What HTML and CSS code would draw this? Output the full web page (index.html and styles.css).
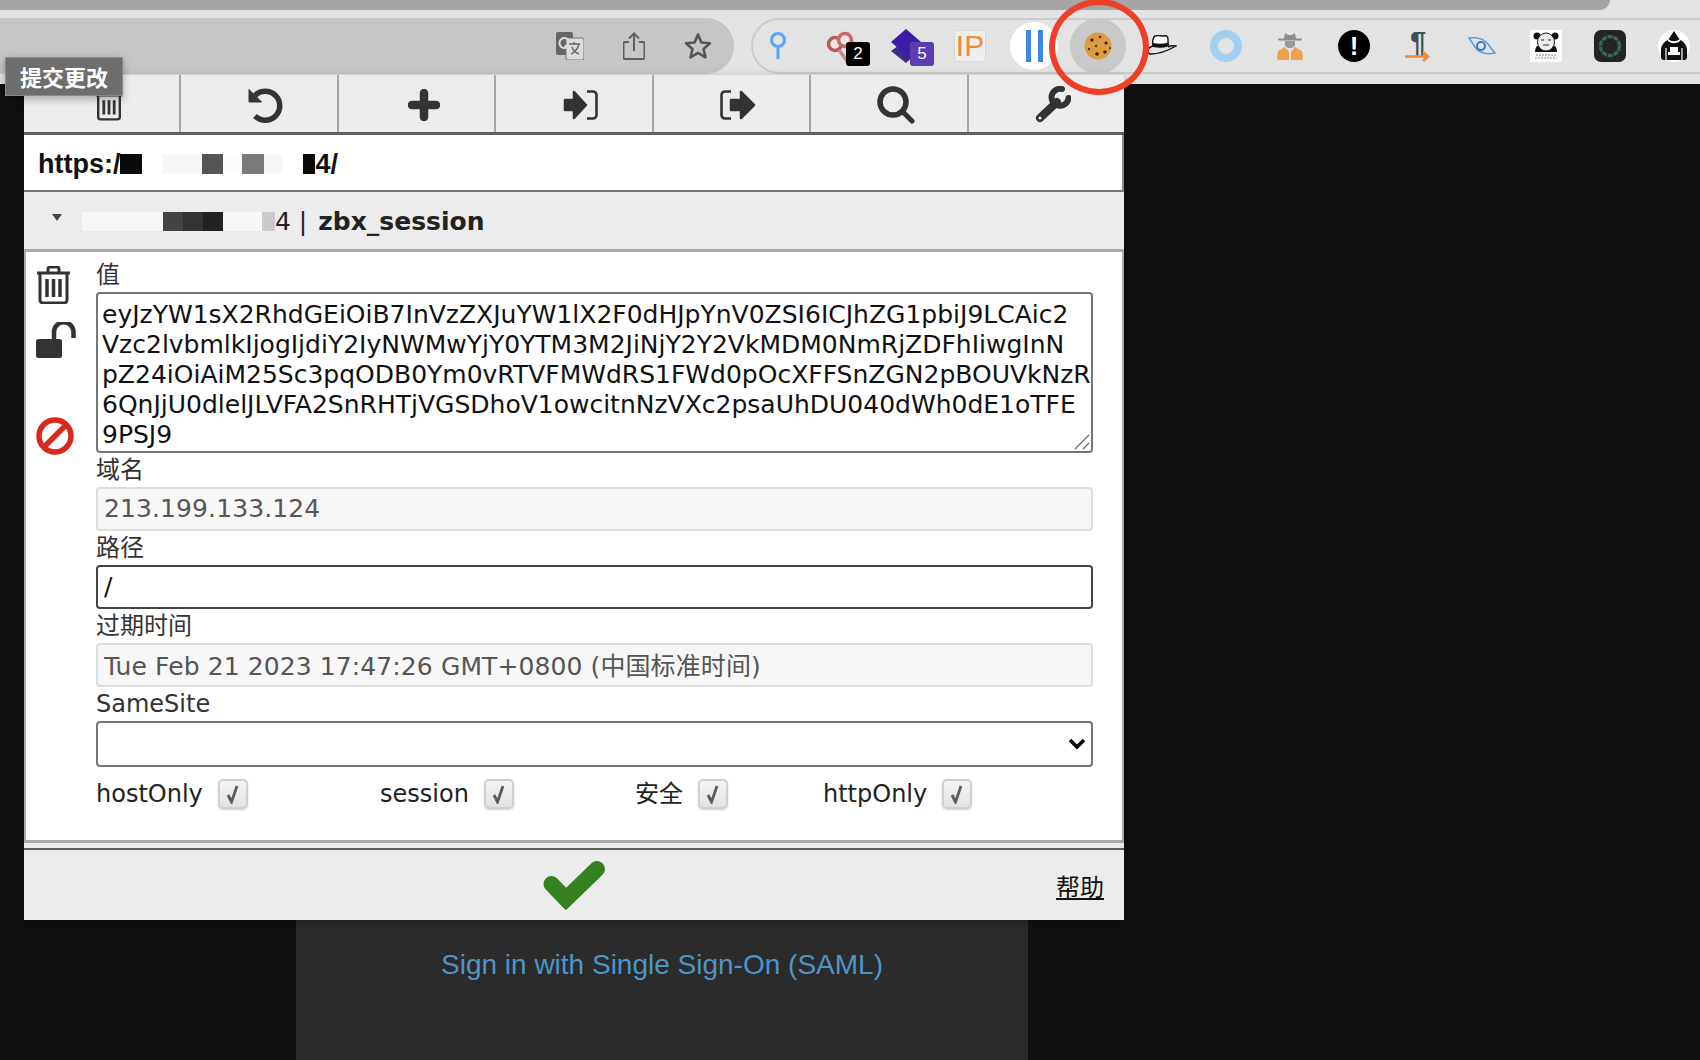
FILE: index.html

```html
<!DOCTYPE html>
<html lang="zh">
<head>
<meta charset="UTF-8" />
<title>zbx_session</title>
<link rel="stylesheet" href="styles.css">
</head>
<body>
  <header class="chrome">
    <div class="tabstrip"></div>
    <div class="toolbar">
      <div class="addr">
        <svg class="addr-icon" width="28" height="28" viewBox="0 0 28 28"><rect x="0" y="0" width="17" height="23" rx="2" fill="#666"/><rect x="10" y="6" width="18" height="22" rx="2" fill="#ddd" stroke="#777"/><path d="M13 12h11M18 10v2M15 22c4-2 7-6 8-10M16 15c1 3 4 6 7 7" stroke="#666" fill="none" stroke-width="1.4"/><path d="M12 7.500A5 5 0 1 0 12.500 14H8.500" stroke="#ddd" stroke-width="2" fill="none"/></svg>
        <svg class="addr-icon" width="22" height="28" viewBox="0 0 22 28"><path d="M6 10H2a1.500 1.500 0 0 0-1.500 1.500v14A1.500 1.500 0 0 0 2 27h18a1.500 1.500 0 0 0 1.500-1.500v-14A1.500 1.500 0 0 0 20 10h-4M11 19V1.500M6 6.500l5-5 5 5" fill="none" stroke="#5e5e5e" stroke-width="2"/></svg>
        <svg class="addr-icon" width="28" height="28" viewBox="0 0 28 28"><path d="M14 2.500l3.400 8 8.600.7-6.500 5.700 2 8.400L14 20.800l-7.500 4.500 2-8.400L2 11.200l8.600-.7z" fill="none" stroke="#555" stroke-width="2.600" stroke-linejoin="round"/></svg>
      </div>
      <div class="exts">
        <div class="ext first">
          <svg width="16" height="28" viewBox="0 0 16 28"><circle cx="8" cy="8" r="6.500" fill="none" stroke="#5aa5f5" stroke-width="3"/><path d="M8 14v13" stroke="#5aa5f5" stroke-width="3"/></svg>
        </div>
        <div class="ext">
          <svg width="34" height="34" viewBox="0 0 34 34"><circle cx="10" cy="15" r="6.500" fill="#f3e4e4" stroke="#b35c5c" stroke-width="3.500"/><circle cx="20" cy="11" r="6.500" fill="#f3e4e4" stroke="#c46a6a" stroke-width="3.500"/><path d="M14 21l8 11M24 16l7 8" stroke="#c98a8a" stroke-width="3.500"/></svg>
          <span class="badge badge-black">2</span>
        </div>
        <div class="ext">
          <svg width="32" height="34" viewBox="0 0 32 34"><path d="M1 22l8-6 20 6-13 12z" fill="#3a2a8c"/><path d="M16 0l15 13-15 13L1 13z" fill="#3b1ca6"/></svg>
          <span class="badge badge-purple">5</span>
        </div>
        <div class="ext"><span class="ip">IP</span></div>
        <div class="ext">
          <div class="pause"><i></i><i></i></div>
        </div>
        <div class="ext">
          <div class="cookie-hover">
            <svg width="30" height="28" viewBox="0 0 30 28"><circle cx="15" cy="14" r="13.500" fill="#dc9c3f"/><circle cx="9" cy="8" r="1.700" fill="#4a2a14"/><circle cx="17" cy="5" r="1.300" fill="#5a3318"/><circle cx="23" cy="11" r="1.600" fill="#3a2010"/><circle cx="13" cy="14" r="1.200" fill="#5a3318"/><circle cx="6" cy="17" r="1.200" fill="#5a3318"/><circle cx="14" cy="22" r="1.800" fill="#3a2010"/><circle cx="22" cy="20" r="1.700" fill="#3a2010"/><circle cx="27" cy="16" r="1" fill="#3a2010"/></svg>
          </div>
        </div>
        <div class="ext">
          <svg width="30" height="24" viewBox="0 0 30 24"><path d="M6 12c-1-4 0-9 2-10 3-1 6 0 9 0 3-1 4 1 4 4 0 2 0 4 .500 6" fill="#fff" stroke="#111" stroke-width="1.400"/><path d="M6 9c5 1 10 1 15-.500v4c-5 1.500-10 1.500-15 .500z" fill="#111"/><path d="M6 12c-3 1-5 3-5 5 0 2 1 3 3 3 8 0 18-4 25-8-3-.500-6 0-8 1" fill="none" stroke="#111" stroke-width="1.400"/></svg>
        </div>
        <div class="ext"><div class="ring"></div></div>
        <div class="ext">
          <svg width="26" height="28" viewBox="0 0 26 28"><path d="M7 7l1-6 3 2h4l3-2 1 6z" fill="#8c8c8c"/><rect x="1" y="6.500" width="24" height="2" rx="1" fill="#8c8c8c"/><path d="M8 9h10v3c0 3-2 4-5 4s-5-1-5-4z" fill="#9a9a9a"/><path d="M8 15l4 5v8H2c-1 0-2-1-2-2l1-7zM18 15l-4 5v8h10c1 0 2-1 2-2l-1-7z" fill="#eca24f"/></svg>
        </div>
        <div class="ext"><div class="alert">!</div></div>
        <div class="ext"><div class="pilcrow"><span>¶</span><svg width="26" height="11" viewBox="0 0 26 11"><path d="M0 5.500h23M18 1l5 4.500-5 4.500" fill="none" stroke="#ef8a33" stroke-width="2.600"/></svg></div></div>
        <div class="ext">
          <svg width="28" height="18" viewBox="0 0 28 18"><path d="M1 1c8-1 15 1 19 6 2 3 4 6 7 9-8 2-16 0-20-6C5 7 3 4 1 1z" fill="none" stroke="#5ba2dc" stroke-width="1.600"/><circle cx="13" cy="9" r="4" fill="none" stroke="#3f78c4" stroke-width="2"/></svg>
        </div>
        <div class="ext">
          <svg width="32" height="32" viewBox="0 0 32 32"><rect width="32" height="32" fill="#fff"/><circle cx="7" cy="6" r="3.500" fill="#111"/><circle cx="25" cy="6" r="3.500" fill="#111"/><path d="M5 22c0-3 1-5 2-6l18 0c1 1 2 3 2 6z" fill="#111"/><ellipse cx="16" cy="12" rx="8.500" ry="9" fill="#eee" stroke="#222"/><path d="M11 10h3M18 10h3M13 15h6" stroke="#222" stroke-width="1.200"/><path d="M6 25h20M5 28h22" stroke="#888" stroke-width="1.200" stroke-dasharray="2 1"/></svg>
        </div>
        <div class="ext">
          <svg width="32" height="32" viewBox="0 0 32 32"><rect width="32" height="32" rx="7" fill="#232323"/><circle cx="16" cy="16" r="9.500" fill="none" stroke="#34665a" stroke-width="3.500" stroke-dasharray="5 1"/></svg>
        </div>
        <div class="ext">
          <svg width="32" height="32" viewBox="0 0 32 32"><circle cx="16" cy="16" r="16" fill="#fff"/><path d="M16 1l6 9c3 1 7 5 7 10v7c0 2-1 3-3 3H6c-2 0-3-1-3-3v-7c0-5 4-9 7-10z" fill="#111"/><path d="M10 9c4 3 8 3 12 0v2c-4 3-8 3-12 0zM10 22h12v3H10zM12 17h8v5h-8z" fill="#fff"/><path d="M8 18v12M24 18v12" stroke="#fff" stroke-width="1.200"/></svg>
        </div>
      </div>
    </div>
  </header>

  <main class="page">
    <div class="login-card">
      <a class="saml-link">Sign in with Single Sign-On (SAML)</a>
    </div>
  </main>

  <section class="popup">
    <nav class="tools">
      <div class="tool">
        <svg width="28" height="38" viewBox="0 0 35 38"><path d="M12 6V3a2 2 0 0 1 2-2h7a2 2 0 0 1 2 2v3M1 7h33M4 7v27a3 3 0 0 0 3 3h21a3 3 0 0 0 3-3V7" fill="none" stroke="#333" stroke-width="3"/><path d="M11 13v18M17.500 13v18M24 13v18" stroke="#333" stroke-width="3.500"/></svg>
      </div>
      <div class="tool">
        <svg width="36" height="36" viewBox="0 0 36 36"><path d="M7 8.500A14.500 14.500 0 1 1 7 29" fill="none" stroke="#333" stroke-width="5.500"/><path d="M1 2.500v12.500h12.500z" fill="#333" stroke="#333" stroke-linejoin="round"/></svg>
      </div>
      <div class="tool">
        <svg width="32" height="32" viewBox="0 0 32 32"><path d="M16 4v24M4 16h24" stroke="#333" stroke-width="8.500" stroke-linecap="round"/></svg>
      </div>
      <div class="tool">
        <svg width="35" height="30" viewBox="0 0 35 30"><path d="M2 10h9V2l12 13-12 13v-8H2z" fill="#333" stroke="#333" stroke-width="2.500" stroke-linejoin="round"/><path d="M24 1.500h6a3.500 3.500 0 0 1 3.500 3.500v20a3.500 3.500 0 0 1-3.500 3.500h-6" fill="none" stroke="#333" stroke-width="2.600"/></svg>
      </div>
      <div class="tool">
        <svg width="36" height="30" viewBox="0 0 36 30"><path d="M11 1.500H5A3.500 3.500 0 0 0 1.500 5v20A3.500 3.500 0 0 0 5 28.500h6" fill="none" stroke="#333" stroke-width="2.600"/><path d="M11 10h10V2l13 13-13 13v-8H11z" fill="#333" stroke="#333" stroke-width="2.500" stroke-linejoin="round"/></svg>
      </div>
      <div class="tool">
        <svg width="38" height="38" viewBox="0 0 38 38"><circle cx="16" cy="16" r="13" fill="none" stroke="#333" stroke-width="5.500"/><path d="M25.500 25.500L35 35" stroke="#333" stroke-width="5" stroke-linecap="round"/></svg>
      </div>
      <div class="tool">
        <svg width="36" height="37" viewBox="0 0 36 37"><path d="M5 32l17-16" stroke="#333" stroke-width="8" stroke-linecap="round"/><path d="M27 3A8.500 8.500 0 1 0 33.500 12" fill="none" stroke="#333" stroke-width="6" stroke-linecap="round"/><circle cx="5" cy="32" r="1.500" fill="#eee"/></svg>
      </div>
    </nav>

    <div class="url-box">
      <span>https:/</span><i class="blur b-black w22"></i><i class="blur b-faint w40 gap20"></i><i class="blur b-dark w21"></i><i class="blur b-faint2 w19"></i><i class="blur b-mid w22"></i><i class="blur b-faint w19"></i><i class="blur b-black w12 gap20"></i><span>4/</span>
    </div>

    <div class="cookie-head">
      <span class="caret"></span>
      <i class="blur2 b-faint w81 gap16"></i><i class="blur2 b-dark1 w20"></i><i class="blur2 b-dark2 w20"></i><i class="blur2 b-dark3 w20"></i><i class="blur2 b-faint w39"></i><i class="blur2 b-light w13"></i>
      <span class="head-host">4 | </span><b>zbx_session</b>
    </div>

    <div class="cookie-body">
      <div class="side">
        <svg class="side-trash" width="35" height="38" viewBox="0 0 35 38"><path d="M12 6V3a2 2 0 0 1 2-2h7a2 2 0 0 1 2 2v3M1 7h33M4 7v27a3 3 0 0 0 3 3h21a3 3 0 0 0 3-3V7" fill="none" stroke="#333" stroke-width="3"/><path d="M11 13v18M17.500 13v18M24 13v18" stroke="#333" stroke-width="3.500"/></svg>
        <svg class="side-lock" width="41" height="36" viewBox="0 0 41 36"><rect y="17" width="26" height="19" rx="2.500" fill="#333"/><path d="M18 17V10a9.500 9.500 0 0 1 19.500 0v6" fill="none" stroke="#333" stroke-width="4.500"/></svg>
        <svg class="side-block" width="38" height="38" viewBox="0 0 38 38"><circle cx="19" cy="19" r="16" fill="none" stroke="#d9291c" stroke-width="5.500"/><path d="M8 30L30 8" stroke="#d9291c" stroke-width="5.500"/></svg>
      </div>
      <form class="form">
        <label class="field-label">值</label>
        <div class="value-wrap">
          <textarea class="value" rows="5" spellcheck="false">eyJzYW1sX2RhdGEiOiB7InVzZXJuYW1lX2F0dHJpYnV0ZSI6ICJhZG1pbiJ9LCAic2
Vzc2lvbmlkIjogIjdiY2IyNWMwYjY0YTM3M2JiNjY2Y2VkMDM0NmRjZDFhIiwgInN
pZ24iOiAiM25Sc3pqODB0Ym0vRTVFMWdRS1FWd0pOcXFFSnZGN2pBOUVkNzR
6QnJjU0dlelJLVFA2SnRHTjVGSDhoV1owcitnNzVXc2psaUhDU040dWh0dE1oTFE
9PSJ9</textarea>
          <svg class="grip" width="16" height="16" viewBox="0 0 16 16"><path d="M1 15L15 1M9 15l6-6" stroke="#666" stroke-width="1.200"/></svg>
        </div>
        <label class="field-label">域名</label>
        <input class="field readonly" value="213.199.133.124" readonly>
        <label class="field-label">路径</label>
        <input class="field" value="/">
        <label class="field-label">过期时间</label>
        <input class="field readonly" value="Tue Feb 21 2023 17:47:26 GMT+0800 (中国标准时间)" readonly>
        <label class="field-label">SameSite</label>
        <div class="select-wrap">
          <select class="field"><option></option></select>
          <svg class="select-arrow" width="18" height="12" viewBox="0 0 18 12"><path d="M2 2l7 7 7-7" fill="none" stroke="#000" stroke-width="3.500"/></svg>
        </div>
        <div class="flags">
          <div class="flag"><span>hostOnly</span><span class="check"><svg width="16" height="20" viewBox="0 0 16 20"><path d="M3 11l3.500 7L12 2" fill="none" stroke="#5c5c5c" stroke-width="2.800"/></svg></span></div>
          <div class="flag"><span>session</span><span class="check"><svg width="16" height="20" viewBox="0 0 16 20"><path d="M3 11l3.500 7L12 2" fill="none" stroke="#5c5c5c" stroke-width="2.800"/></svg></span></div>
          <div class="flag"><span>安全</span><span class="check"><svg width="16" height="20" viewBox="0 0 16 20"><path d="M3 11l3.500 7L12 2" fill="none" stroke="#5c5c5c" stroke-width="2.800"/></svg></span></div>
          <div class="flag"><span>httpOnly</span><span class="check"><svg width="16" height="20" viewBox="0 0 16 20"><path d="M3 11l3.500 7L12 2" fill="none" stroke="#5c5c5c" stroke-width="2.800"/></svg></span></div>
        </div>
      </form>
    </div>

    <footer class="popup-foot">
      <svg class="save" width="64" height="50" viewBox="0 0 64 50"><path d="M9.500 24l14.500 15L55 9" fill="none" stroke="#35801f" stroke-width="16" stroke-linecap="round"/></svg>
      <a class="help">帮助</a>
    </footer>
  </section>

  <div class="tooltip">提交更改</div>
  <div class="red-mark"></div>
</body>
</html>
```

FILE: styles.css

```css
html, body {
  margin: 0;
  height: 1060px;
  overflow: hidden;
}
body {
  background: #0f1012;
  font-family: "DejaVu Sans", "Noto Sans CJK SC", sans-serif;
  color: #222;
}

/* browser bar */
.chrome {
  height: 84px;
  background: #e3e3e3;
}
.tabstrip {
  height: 10px;
  margin-right: 90px;
  background: #a5a5a5;
  border-radius: 0 0 10px 0;
}
.toolbar {
  display: flex;
  margin-top: 8px;
  height: 56px;
}
.addr {
  flex: 0 0 734px;
  background: #c6c6c6;
  border-radius: 0 28px 28px 0;
  display: flex;
  align-items: center;
  justify-content: flex-end;
  gap: 39px;
  padding-right: 22px;
  box-sizing: border-box;
}
.exts {
  flex: 1;
  min-width: 0;
  margin-left: 17px;
  display: flex;
  align-items: center;
  border: 2px solid #cbcbcb;
  border-right: none;
  border-radius: 28px 0 0 28px;
}
.ext {
  position: relative;
  flex: 0 0 64px;
  display: flex;
  align-items: center;
  justify-content: center;
}
.ext.first {
  margin-left: -7px;
}
.badge {
  position: absolute;
  left: 36px;
  top: 13px;
  width: 24px;
  height: 24px;
  border-radius: 3px;
  color: #fff;
  font: 17px/24px "Liberation Sans", sans-serif;
  text-align: center;
}
.badge-black { background: #000; left: 36px; }
.badge-purple { background: #5b3cb5; left: 36px; }
.ip {
  width: 30px;
  height: 30px;
  background: #efefef;
  border: 1px solid #d8d8d8;
  border-radius: 3px;
  color: #f0893a;
  font: 30px/30px "Liberation Sans", sans-serif;
  text-align: center;
}
.pause {
  width: 48px;
  height: 48px;
  border-radius: 50%;
  background: #fff;
  display: flex;
  align-items: center;
  justify-content: center;
  gap: 7px;
}
.pause i {
  width: 5px;
  height: 32px;
  background: #3b86e8;
}
.cookie-hover {
  width: 56px;
  height: 56px;
  border-radius: 50%;
  background: #c9c9c9;
  display: flex;
  align-items: center;
  justify-content: center;
}
.ring {
  width: 16px;
  height: 16px;
  border: 8px solid #a3d0f0;
  border-radius: 50%;
}
.alert {
  width: 32px;
  height: 32px;
  border-radius: 50%;
  background: #000;
  color: #fff;
  font: bold 26px/32px "Liberation Sans", sans-serif;
  text-align: center;
}
.pilcrow {
  display: flex;
  flex-direction: column;
  align-items: center;
  width: 26px;
  height: 32px;
}
.pilcrow span {
  height: 21px;
  color: #3f5059;
  font: bold 29px/24px "Liberation Sans", sans-serif;
}

/* page behind the popup */
.page {
  display: flex;
  height: 976px;
  padding-left: 296px;
}
.login-card {
  width: 732px;
  background: #2b2b2b;
  box-sizing: border-box;
  padding-top: 864px;
  text-align: center;
}
.saml-link {
  color: #4f96c8;
  font: 28px/34px "Liberation Sans", sans-serif;
}

/* popup */
.popup {
  position: absolute;
  left: 24px;
  top: 75px;
  width: 1100px;
  background: #ececec;
  box-shadow: 0 2px 8px rgba(0,0,0,0.25);
}
.tools {
  display: flex;
  height: 57px;
  border-bottom: 3px solid #5f5f5f;
}
.tool {
  flex: 1;
  display: flex;
  align-items: center;
  justify-content: center;
  padding: 2px 0 0 14px;
  box-sizing: border-box;
  border-right: 2px solid #a5a5a5;
}
.tool:last-child {
  border-right: none;
}
.url-box {
  display: flex;
  align-items: center;
  height: 57px;
  padding: 3px 0 0 14px;
  background: #fff;
  border-bottom: 2px solid #777;
  border-right: 2px solid #8a8a8a;
  font: bold 27px "Liberation Sans", sans-serif;
  color: #111;
  box-sizing: border-box;
}
.blur {
  height: 20px;
  display: block;
}
.blur2 {
  height: 19px;
  display: block;
}
.b-black { background: #0a0a0a; }
.b-faint { background: #f7f7f7; }
.b-faint2 { background: #fcfcfc; }
.b-dark { background: #555; }
.b-mid { background: #7b7b7b; }
.b-dark1 { background: #444; }
.b-dark2 { background: #333; }
.b-dark3 { background: #222; }
.b-light { background: #cbcbcb; }
.w12 { width: 12px; }
.w13 { width: 13px; }
.w19 { width: 19px; }
.w20 { width: 20px; }
.w21 { width: 21px; }
.w22 { width: 22px; }
.w39 { width: 39px; }
.w40 { width: 40px; }
.w81 { width: 81px; }
.gap16 { margin-left: 16px; }
.gap20 { margin-left: 20px; }
.cookie-head {
  display: flex;
  align-items: center;
  height: 58px;
  margin-top: 2px;
  padding-left: 28px;
  border-bottom: 3px solid #aaa;
  box-sizing: border-box;
  font-size: 25px;
  white-space: pre;
}
.head-host {
  margin-right: 3px;
}
.caret {
  width: 0;
  height: 0;
  border-left: 5px solid transparent;
  border-right: 5px solid transparent;
  border-top: 7px solid #444;
  margin-right: 4px;
  margin-top: -8px;
}
.cookie-body {
  display: flex;
  height: 591px;
  background: #fff;
  border: 2px solid #aaa;
  border-width: 0 2px 3px;
  box-sizing: border-box;
}
.side {
  width: 70px;
  display: flex;
  flex-direction: column;
  align-items: flex-start;
  padding: 14px 0 0 10px;
  box-sizing: border-box;
}
.side-lock { margin-top: 18px; }
.side-block { margin-top: 59px; }
.form {
  width: 997px;
  padding-top: 6px;
}
.field-label {
  display: block;
  height: 34px;
  font-size: 24px;
  line-height: 35px;
  color: #333;
}
.value-wrap {
  position: relative;
}
.value {
  display: block;
  width: 100%;
  height: 161px;
  padding: 6px 4px 2px;
  box-sizing: border-box;
  border: 2px solid #767676;
  border-radius: 4px;
  font: 25px/30px "DejaVu Sans", sans-serif;
  color: #111;
  white-space: pre;
  overflow: hidden;
  resize: none;
}
.grip {
  position: absolute;
  right: 3px;
  bottom: 3px;
}
.field {
  display: block;
  width: 100%;
  height: 44px;
  padding: 0 6px 2px;
  box-sizing: border-box;
  border: 2px solid #444;
  border-radius: 4px;
  background: #fff;
  font: 25px "DejaVu Sans", "Noto Sans CJK SC", sans-serif;
  letter-spacing: 0.1px;
  color: #111;
}
.field.readonly {
  background: #f7f7f7;
  border-color: #ddd;
  color: #555;
}
.select-wrap {
  position: relative;
}
.select-wrap .field {
  height: 46px;
  appearance: none;
  border-color: #767676;
}
.select-arrow {
  position: absolute;
  right: 7px;
  top: 17px;
}
.flags {
  display: grid;
  grid-template-columns: 284px 255px 188px 1fr;
  margin-top: 12px;
}
.flag {
  display: flex;
  align-items: center;
  gap: 15px;
  height: 30px;
  font-size: 24px;
  line-height: 26px;
  color: #222;
}
.check {
  width: 30px;
  height: 30px;
  box-sizing: border-box;
  border: 2px solid #cfcfcf;
  border-radius: 5px;
  background: linear-gradient(#f4f4f4, #e2e2e2);
  box-shadow: 0 1px 2px rgba(0,0,0,0.2);
  display: flex;
  align-items: center;
  justify-content: center;
}
.popup-foot {
  display: grid;
  grid-template-columns: 1fr auto 1fr;
  align-items: center;
  height: 72px;
  margin-top: 5px;
  border-top: 2px solid #5f5f5f;
  box-sizing: border-box;
}
.save {
  grid-column: 2;
}
.help {
  grid-column: 3;
  justify-self: end;
  margin-right: 20px;
  font-size: 24px;
  color: #111;
  text-decoration: underline;
}

/* things on top */
.tooltip {
  position: absolute;
  left: 5px;
  top: 57px;
  width: 118px;
  height: 39px;
  box-sizing: border-box;
  background: #6e6e6e;
  border: 1px solid #8a8a8a;
  box-shadow: 0 3px 8px rgba(0,0,0,0.3);
  color: #fff;
  font: bold 22px/37px "Noto Sans CJK SC", sans-serif;
  text-align: center;
}
.red-mark {
  position: absolute;
  left: 1049px;
  top: -1px;
  width: 100px;
  height: 96px;
  box-sizing: border-box;
  border: 6px solid #ee4028;
  border-radius: 50%;
}
```
